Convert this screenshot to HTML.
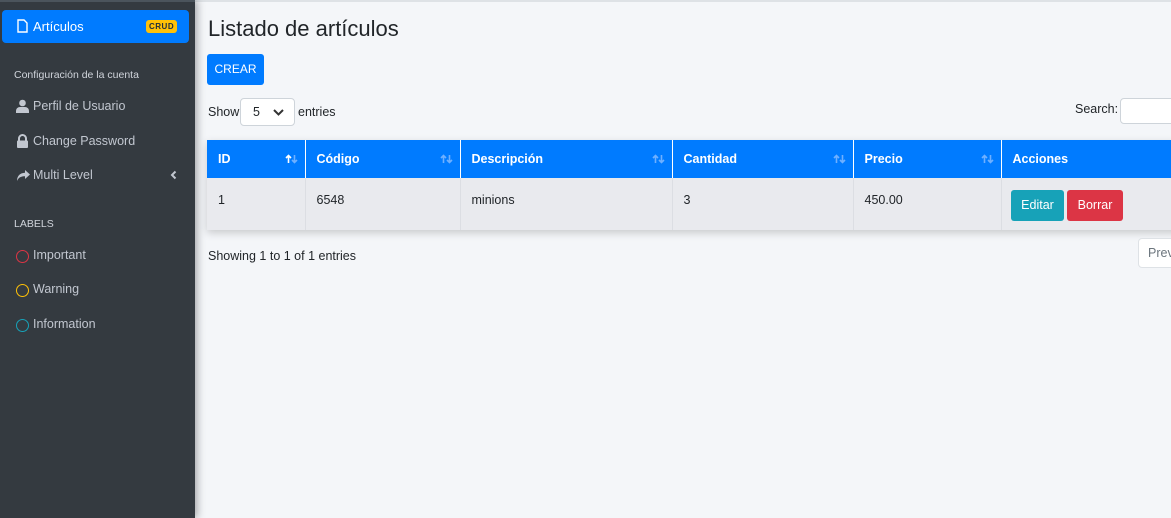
<!DOCTYPE html>
<html><head><meta charset="utf-8"><style>
*{box-sizing:border-box;margin:0;padding:0}
body{width:1171px;height:518px;overflow:hidden;background:#f4f6f9;font-family:"Liberation Sans",sans-serif;font-size:12.5px;color:#212529;position:relative}
.sb{position:absolute;left:0;top:0;width:195px;height:518px;background:#343a40;border-top:2px solid #4b545c;box-shadow:2px 0 8px rgba(0,0,0,.35)}
.act{position:absolute;left:2px;top:8px;width:187px;height:33px;background:#007bff;border-radius:4px;color:#fff;font-size:13px}
.act span.t{position:absolute;left:31px;top:9px}
.badge{position:absolute;left:144px;top:10px;background:#ffc107;color:#1f2d3d;font-size:8px;font-weight:bold;padding:2px 3px;border-radius:3px;letter-spacing:.5px}
.it{position:absolute;left:33px;color:#c2c7d0;font-size:12.5px}
.hd{position:absolute;left:14px;color:#d0d4db;font-size:10.5px}
.ic{position:absolute;left:16px}
.ring{position:absolute;left:16px;width:13px;height:13px;border-radius:50%;border:1.5px solid}
.top{position:absolute;left:195px;top:0;right:0;height:2px;background:#dee2e6}
h1{position:absolute;left:208px;top:16px;font-weight:normal;font-size:22px;color:#212529}
.btn{position:absolute;color:#fff;border-radius:3px;text-align:center;font-size:12.5px}
table{position:absolute;left:207px;top:140px;width:1000px;border-collapse:collapse;box-shadow:0 3px 8px rgba(0,0,0,.18)}
th{background:#007bff;color:#fff;text-align:left;height:38px;padding-left:11px;font-size:12.5px;border-right:1px solid #fff;position:relative}
th svg{position:absolute;right:7px;top:14px}
td{background:#e9eaee;height:52px;vertical-align:top;padding:15px 0 0 11px;border-right:1px solid #dcdee3}
</style></head><body>
<svg width="0" height="0" style="position:absolute"><defs>
<g id="ar"><path d="M3.5 9V1.5M1 4l2.5-2.5L6 4" fill="none" stroke="var(--u)" stroke-width="1.6"/><path d="M9.5 1v7.5M7 6l2.5 2.5L12 6" fill="none" stroke="#6fb0ff" stroke-width="1.6"/></g>
</defs></svg>
<div class="top"></div>
<div class="sb">
<div class="act"><svg class="ic" style="left:15px;top:9px" width="11" height="14" viewBox="0 0 11 14"><path d="M1 1h6l3 3v9H1z" fill="none" stroke="#fff" stroke-width="1.4"/></svg><span class="t">Artículos</span><span class="badge">CRUD</span></div>
<div class="hd" style="top:67px">Configuración de la cuenta</div>
<svg class="ic" style="top:97px" width="13" height="14" viewBox="0 0 13 14"><circle cx="6.5" cy="4" r="3.3" fill="#c2c7d0"/><path d="M0 14v-2a4 4 0 0 1 4-4h5a4 4 0 0 1 4 4v2z" fill="#c2c7d0"/></svg>
<div class="it" style="top:97px">Perfil de Usuario</div>
<svg class="ic" style="top:132px" width="13" height="14" viewBox="0 0 13 14"><path d="M3 7V4.5a3.5 3.5 0 0 1 7 0V7" fill="none" stroke="#c2c7d0" stroke-width="2"/><rect x="1" y="6.5" width="11" height="7.5" rx="1" fill="#c2c7d0"/></svg>
<div class="it" style="top:132px">Change Password</div>
<svg class="ic" style="top:167px" width="14" height="13" viewBox="0 0 14 13"><path d="M9 1l5 4.5L9 10V7.3C5 7.3 2.5 8.5 1 12 1 7 4 4 9 3.8z" fill="#c2c7d0"/></svg>
<div class="it" style="top:166px">Multi Level</div>
<svg class="ic" style="left:170px;top:168px" width="7" height="10" viewBox="0 0 7 10"><path d="M5.5 1.5L2 5l3.5 3.5" fill="none" stroke="#c2c7d0" stroke-width="2"/></svg>
<div class="hd" style="top:216px">LABELS</div>
<div class="ring" style="top:248px;border-color:#dc3545"></div><div class="it" style="top:246px">Important</div>
<div class="ring" style="top:282px;border-color:#ffc107"></div><div class="it" style="top:280px">Warning</div>
<div class="ring" style="top:317px;border-color:#17a2b8"></div><div class="it" style="top:315px">Information</div>
</div>
<h1>Listado de artículos</h1>
<div class="btn" style="left:207px;top:54px;width:57px;height:31px;line-height:31px;background:#007bff;font-size:12px">CREAR</div>
<div style="position:absolute;left:208px;top:105px">Show</div>
<div style="position:absolute;left:240px;top:98px;width:55px;height:28px;border:1px solid #ced4da;border-radius:4px;background:#fff;padding:6px 0 0 12px">5 <svg style="position:absolute;left:32px;top:10px" width="11" height="8" viewBox="0 0 11 8"><path d="M1 1l4.5 4.5L10 1" fill="none" stroke="#333" stroke-width="2"/></svg></div>
<div style="position:absolute;left:298px;top:105px">entries</div>
<div style="position:absolute;left:1075px;top:102px">Search:</div>
<div style="position:absolute;left:1120px;top:98px;width:60px;height:26px;border:1px solid #ced4da;border-radius:4px;background:#fff"></div>
<table>
<tr><th style="width:98px">ID<svg width="13" height="10" style="--u:#fff"><use href="#ar"/></svg></th><th style="width:155px">Código<svg width="13" height="10" style="--u:#6fb0ff"><use href="#ar"/></svg></th><th style="width:212px">Descripción<svg width="13" height="10" style="--u:#6fb0ff"><use href="#ar"/></svg></th><th style="width:181px">Cantidad<svg width="13" height="10" style="--u:#6fb0ff"><use href="#ar"/></svg></th><th style="width:148px">Precio<svg width="13" height="10" style="--u:#6fb0ff"><use href="#ar"/></svg></th><th>Acciones</th></tr>
<tr><td>1</td><td>6548</td><td>minions</td><td>3</td><td>450.00</td><td></td></tr>
</table>
<div class="btn" style="left:1011px;top:190px;width:53px;height:31px;line-height:31px;background:#17a2b8">Editar</div>
<div class="btn" style="left:1067px;top:190px;width:56px;height:31px;line-height:31px;background:#dc3545">Borrar</div>
<div style="position:absolute;left:208px;top:249px">Showing 1 to 1 of 1 entries</div>
<div style="position:absolute;left:1138px;top:238px;width:50px;height:30px;border:1px solid #dee2e6;border-radius:4px 0 0 4px;background:#fff;color:#6c757d;padding:7px 0 0 9px">Previous</div>
</body></html>
